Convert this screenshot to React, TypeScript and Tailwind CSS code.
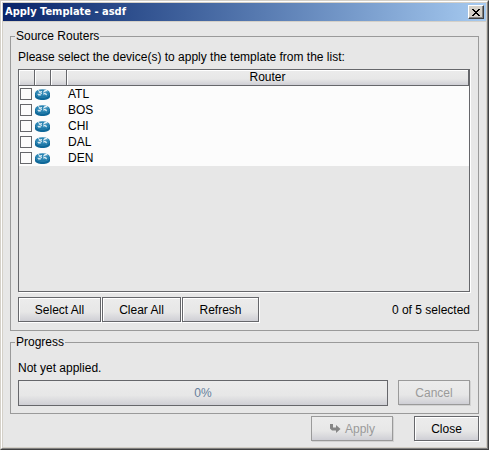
import React, { useState } from 'react';

const routers = ['ATL', 'BOS', 'CHI', 'DAL', 'DEN'];

const metal = 'bg-linear-to-b from-[#ececec] via-[#e7e7e7] via-60% to-[#cfcfd5]';
const headCell = `${metal} h-4 p-0 font-normal leading-[15px] border-r border-b border-[#66676b] shadow-[inset_1px_1px_0_#fff]`;

function RouterIcon() {
  return (
    <svg width="15" height="11" viewBox="0 0 15 11" className="block" aria-hidden="true">
      <path d="M0 4v3.500c0 2 3.300 3.500 7.500 3.500s7.500-1.500 7.500-3.500V4z" fill="#0f6899" />
      <path d="M0.500 5.500c1 1.700 3.600 2.700 7 2.700s6-1 7-2.700" stroke="#3c93bd" strokeWidth="0.700" fill="none" />
      <ellipse cx="7.500" cy="3.800" rx="7.300" ry="3.600" fill="#2c86b4" />
      <path d="M3 1.500L5.800 3M3.800 3.300H6.400V2M12 6L9.200 4.500M11.400 4.300H8.800V5.600" stroke="#e4f1f7" fill="none" />
      <path d="M8 3.200L11.500 1.700M9.300 1.500h2.700v1M7 4.500L3.400 5.700M3.200 4.700v1.300h2.600" stroke="#e4f1f7" fill="none" />
    </svg>
  );
}

function Button(props: { width: string; disabled?: boolean; onClick?: () => void; children: React.ReactNode }) {
  return (
    <button
      type="button"
      disabled={props.disabled}
      onClick={props.onClick}
      className={`${props.width} ${metal} h-[25px] shrink-0 flex items-center justify-center gap-1 border ${
        props.disabled
          ? 'border-[#9a9a9a] text-[#9a9a9a] shadow-[1px_1px_0_#d2d2d2]'
          : 'border-[#66676b] text-black shadow-[inset_1px_1px_0_#fff,1px_1px_0_#fff]'
      }`}
    >
      {props.children}
    </button>
  );
}

function Group(props: { title: string; className: string; children: React.ReactNode }) {
  return (
    <fieldset className={`${props.className} min-w-0 border border-[#9a9a9a] pl-[7px] pr-2`}>
      <legend className="-ml-[3px] px-px leading-[14px]">{props.title}</legend>
      {props.children}
    </fieldset>
  );
}

export default function App() {
  const [selected, setSelected] = useState<string[]>([]);

  const toggle = (name: string) => {
    setSelected(selected.includes(name) ? selected.filter((s) => s !== name) : [...selected, name]);
  };

  return (
    <div className="min-h-screen flex flex-col border border-t-[#d4d0c8] border-l-[#d4d0c8] border-r-[#404040] border-b-[#404040] bg-[#e7e7e7] font-['Liberation_Sans',Arial,sans-serif] text-[12px] leading-[16px] text-black">
      <div className="flex-1 flex flex-col border border-t-white border-l-white border-r-[#808080] border-b-[#808080]">
        <div className="flex-1 flex flex-col border border-[#d4d0c8]">
          <div className="h-[18px] flex items-center justify-between px-[2px] bg-linear-to-r from-[#0a246a] to-[#a6caf0]">
            <h1 className="text-white font-bold text-[11px] font-['DejaVu_Sans_Condensed','DejaVu_Sans',Tahoma,sans-serif]">
              Apply Template - asdf
            </h1>
            <button
              type="button"
              aria-label="Close window"
              className="w-4 h-[14px] flex items-center justify-center bg-[#d4d0c8] border border-t-white border-l-white border-r-[#404040] border-b-[#404040] shadow-[inset_-1px_-1px_0_#808080]"
            >
              <svg width="8" height="7" viewBox="0 0 8 7" shapeRendering="crispEdges" aria-hidden="true">
                <path d="M0 0h2v1h1v1h2V1h1V0h2v1H7v1H6v1H5v1h1v1h1v1h1v1H6V6H5V5H3v1H2v1H0V6h1V5h1V4h1V3H2V2H1V1H0z" />
              </svg>
            </button>
          </div>

          <div className="flex-1 flex flex-col border-t border-[#d4d0c8] px-[7px] pt-[7px] pb-[5px]">
            <Group title="Source Routers" className="pb-2">
              <p className="mt-[6px]">Please select the device(s) to apply the template from the list:</p>
              <div className="mt-1 min-h-[223px] border border-[#66676b] shadow-[1px_1px_0_#fff]">
                <table className="w-full table-fixed border-separate border-spacing-0">
                  <colgroup>
                    <col className="w-4" />
                    <col className="w-4" />
                    <col className="w-4" />
                    <col />
                  </colgroup>
                  <thead>
                    <tr>
                      <th className={headCell} />
                      <th className={headCell} />
                      <th className={headCell} />
                      <th className={headCell}>Router</th>
                    </tr>
                  </thead>
                  <tbody className="bg-[#fcfcfc]">
                    {routers.map((name) => (
                      <tr key={name}>
                        <td className="h-4 p-0">
                          <input
                            type="checkbox"
                            aria-label={name}
                            checked={selected.includes(name)}
                            onChange={() => toggle(name)}
                            className="block ml-px size-3 appearance-none border border-[#66676b] bg-[#fcfcfc] checked:bg-[#66676b]"
                          />
                        </td>
                        <td className="h-4 p-0">
                          <RouterIcon />
                        </td>
                        <td className="h-4 p-0" />
                        <td className="h-4 p-0 pl-px">{name}</td>
                      </tr>
                    ))}
                  </tbody>
                </table>
              </div>
              <div className="mt-[5px] flex items-center">
                <div className="flex gap-px">
                  <Button width="w-[83px]" onClick={() => setSelected(routers)}>
                    Select All
                  </Button>
                  <Button width="w-[79px]" onClick={() => setSelected([])}>
                    Clear All
                  </Button>
                  <Button width="w-[77px]">Refresh</Button>
                </div>
                <span className="ml-auto">
                  {selected.length} of {routers.length} selected
                </span>
              </div>
            </Group>

            <Group title="Progress" className="mt-1 pb-[7px]">
              <p className="mt-[11px]">Not yet applied.</p>
              <div className="mt-1 flex gap-[10px]">
                <div
                  role="progressbar"
                  aria-label="Progress"
                  aria-valuenow={0}
                  className={`${metal} h-[26px] flex-1 flex items-center justify-center border border-[#66676b] text-[#667f9c]`}
                >
                  0%
                </div>
                <Button width="w-[72px]" disabled>
                  Cancel
                </Button>
              </div>
            </Group>

            <div className="mt-[2px] flex justify-end gap-[21px]">
              <Button width="w-[82px]" disabled>
                <svg width="12" height="10" viewBox="0 0 12 10" fill="#858585" aria-hidden="true">
                  <path d="M1 0h3v3.500h3V1l4.500 4L7 9V6.500H3L1 4.500z" />
                </svg>
                Apply
              </Button>
              <Button width="w-[65px]">Close</Button>
            </div>
          </div>
        </div>
      </div>
    </div>
  );
}
